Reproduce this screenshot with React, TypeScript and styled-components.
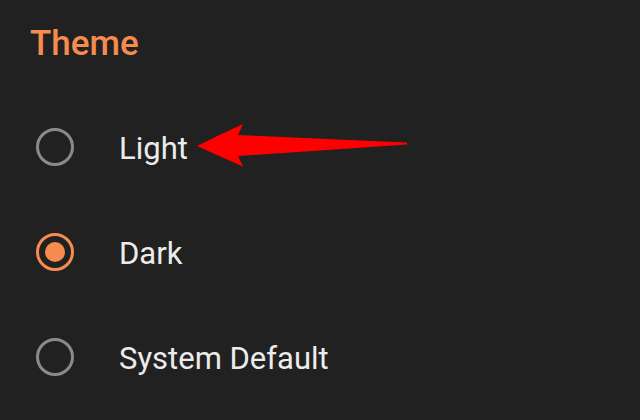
import React from 'react'
import styled, { createGlobalStyle } from 'styled-components'

const GlobalStyle = createGlobalStyle`
  html, body {
    margin: 0;
    padding: 0;
    background: #212121;
  }
  body {
    font-family: Roboto, "Liberation Sans", sans-serif;
  }
`

const Screen = styled.div`
  position: relative;
  width: 640px;
  height: 420px;
  overflow: hidden;
  background: #212121;
  padding: 23px 30px 0;
  box-sizing: border-box;
`

const Title = styled.h2`
  margin: 0 0 29px;
  font-size: 35px;
  line-height: 42px;
  font-weight: 500;
  color: #f58b4e;
`

const OptionList = styled.div`
  display: flex;
  flex-direction: column;
`

const OptionRow = styled.label`
  display: flex;
  align-items: center;
  height: 105px;
  padding-left: 6px;
  gap: 45px;
  cursor: pointer;
`

const Radio = styled.span<{ $checked?: boolean }>`
  position: relative;
  width: 38px;
  height: 38px;
  flex: none;
  box-sizing: border-box;
  border-radius: 50%;
  border: 3.5px solid ${p => (p.$checked ? '#f58b4e' : '#8a8a8a')};

  &::after {
    content: '';
    display: ${p => (p.$checked ? 'block' : 'none')};
    position: absolute;
    inset: 6px;
    border-radius: 50%;
    background: #f58b4e;
  }
`

const OptionLabel = styled.span`
  font-size: 31px;
  color: #ececec;
  padding-top: 3px;
`

const Arrow = styled.svg`
  position: absolute;
  left: 190px;
  top: 115px;
`

const options = [
    { label: 'Light', checked: false },
    { label: 'Dark', checked: true },
    { label: 'System Default', checked: false },
]

export default function App() {
    return (
        <>
            <GlobalStyle />
            <Screen>
                <Title>Theme</Title>
                <OptionList>
                    {options.map(o => (
                        <OptionRow key={o.label}>
                            <Radio $checked={o.checked} />
                            <OptionLabel>{o.label}</OptionLabel>
                        </OptionRow>
                    ))}
                </OptionList>
                <Arrow width="225" height="60" viewBox="0 0 225 60">
                    <path
                        d="M7,31 Q31,19 53,9 L48,20 L217,27.5 L217,29.5 L48,41 L53,51.5 Q31,42 7,31 Z"
                        fill="#ff0000"
                    />
                </Arrow>
            </Screen>
        </>
    )
}
